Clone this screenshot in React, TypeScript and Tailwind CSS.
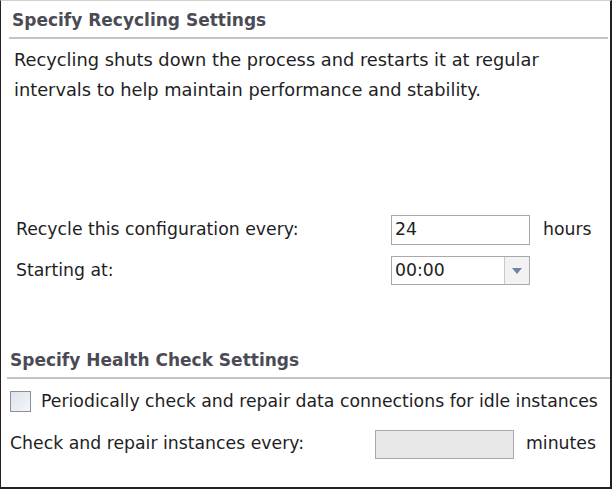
import React from "react"

const font = { fontFamily: '"DejaVu Sans", Verdana, sans-serif' }

function Heading({ children }: { children: React.ReactNode }) {
  return (
    <div className="border-b-2 border-[#c4c4c4] pb-[5px] pl-[3px]">
      <h2 className="text-[17px] font-bold leading-[24px] text-[#4b4b55]">{children}</h2>
    </div>
  )
}

export default function App() {
  return (
    <div
      className="box-border h-[489px] w-[612px] border-t border-l border-r-2 border-b-2 border-t-[#d0d0d0] border-l-[#222] border-r-[#222] border-b-[#222] bg-white text-[17.3px] text-[#1e1e24]"
      style={font}
    >
      {/* Recycling */}
      <div className="pl-[8px] pr-[2px] pt-[7px]">
        <Heading>Specify Recycling Settings</Heading>
      </div>
      <p className="px-[13px] pt-[6px] text-[17.8px] leading-[30px]">
        Recycling shuts down the process and restarts it at regular
        <br />
        intervals to help maintain performance and stability.
      </p>

      <div className="mt-[110px] flex flex-col gap-[11px] pl-[15px]">
        <div className="flex items-center">
          <span className="w-[375px]">Recycle this configuration every:</span>
          <div className="flex h-[30px] w-[139px] items-center border border-[#a9a9a9] bg-white px-[3px]">
            24
          </div>
          <span className="ml-[13px]">hours</span>
        </div>
        <div className="flex items-center">
          <span className="w-[375px]">Starting at:</span>
          <div className="flex h-[29px] w-[139px] border border-[#a9a9a9] bg-white">
            <span className="flex flex-1 items-center px-[3px]">00:00</span>
            <span className="flex w-[25px] items-center justify-center border-l border-[#c8c8c8] bg-[#f2f2f2]">
              <svg width="10" height="6" viewBox="0 0 10 6">
                <path d="M0 0 H10 L5 6 Z" fill="#6b84a8" />
              </svg>
            </span>
          </div>
        </div>
      </div>

      {/* Health check */}
      <div className="mt-[63px] pl-[6px]">
        <Heading>Specify Health Check Settings</Heading>
      </div>
      <div className="mt-[10px] flex items-center pl-[9px]">
        <span className="h-[21px] w-[21px] border border-[#8f8f8f] bg-gradient-to-br from-[#dde4ee] to-[#f4f6f9]" />
        <span className="ml-[10px]">Periodically check and repair data connections for idle instances</span>
      </div>
      <div className="mt-[15px] flex items-center pl-[9px]">
        <span className="w-[365px]">Check and repair instances every:</span>
        <div className="h-[29px] w-[139px] border border-[#a9a9a9] bg-[#e8e8e8]" />
        <span className="ml-[12px]">minutes</span>
      </div>
    </div>
  )
}
